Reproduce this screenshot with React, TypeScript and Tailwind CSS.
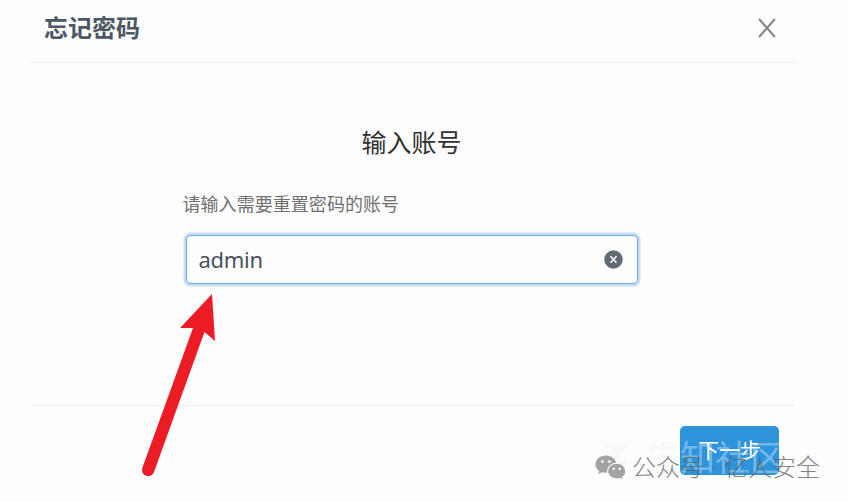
import React from "react";

const cjk = "font-['Noto_Sans','Noto_Sans_CJK_SC',sans-serif]";

function WeChatIcon() {
  return (
    <svg width="32" height="27" viewBox="0 0 32 27" className="shrink-0">
      <path
        d="M10.800.500C4.900.500.400 4.400.400 9.300c0 2.800 1.500 5.100 3.800 6.700l-1 3.300 3.800-2c1.200.3 2.500.5 3.800.5 6 0 10.500-3.800 10.500-8.500S16.800.500 10.800.500z"
        fill="#a3a3a3"
      />
      <circle cx="7.400" cy="6.600" r="1.400" fill="#fdfdfd" />
      <circle cx="14.400" cy="6.600" r="1.400" fill="#fdfdfd" />
      <path
        d="M21.700 8.300c-5.200 0-9.100 3.400-9.100 7.900s3.900 7.800 9.100 7.800c1.200 0 2.300-.2 3.300-.5l3.300 1.900-.9-3c2.100-1.500 3.400-3.700 3.400-6.200 0-4.500-3.900-7.900-9.100-7.900z"
        fill="#a3a3a3"
        stroke="#fdfdfd"
        strokeWidth="1.100"
      />
      <circle cx="18.700" cy="13.800" r="1.200" fill="#fdfdfd" />
      <circle cx="24.700" cy="13.800" r="1.200" fill="#fdfdfd" />
    </svg>
  );
}

export default function App() {
  return (
    <div className={`relative h-[502px] w-[848px] overflow-hidden bg-[#fdfdfd] pl-[31px] pr-[54px] ${cjk}`}>
      <header className="flex h-[63px] items-center justify-between border-b border-[#ececee] pr-[18px] pl-[13px] pb-[7px]">
        <h1 className="text-[24px] leading-none font-bold text-[#4c5763]">忘记密码</h1>
        <button aria-label="关闭">
          <svg width="18" height="20" viewBox="0 0 18 20" className="block">
            <path d="M1 1L17 19M17 1L1 19" stroke="#858585" strokeWidth="2" fill="none" />
          </svg>
        </button>
      </header>

      <main className="flex h-[342px] flex-col items-center pt-[65px]">
        <h2 className="-translate-x-px text-[25px] leading-[28px] text-[#303030]">输入账号</h2>
        <div className="mt-[38px] w-[456px] -translate-x-[2px]">
          <label className="block text-[18px] leading-[20px] tracking-[0.05px] text-[#707070]">请输入需要重置密码的账号</label>
          <div className="mt-[21px] ml-[3px] flex h-[49px] w-[452px] items-center justify-between rounded-[5px] border border-[#6fa5e0] bg-[#fefefe] pr-[14px] pl-[12px] shadow-[0_0_0_2.5px_#c6ddf9]">
            <span className="pb-px text-[22px] leading-none tracking-[-0.3px] text-[#48525e]">admin</span>
            <svg width="19" height="19" viewBox="0 0 19 19">
              <circle cx="9.500" cy="9.500" r="9.200" fill="#626a73" />
              <path d="M6.500 6.300l6 6.400M12.500 6.300l-6 6.400" stroke="#fff" strokeWidth="1.600" />
            </svg>
          </div>
        </div>
      </main>

      <footer className="flex justify-end border-t border-[#efeff1] pt-[20px] pr-[15px]">
        <button className="h-[49px] w-[99px] rounded-[5px] bg-[#2d94dc] text-[21px] leading-none text-white">下一步</button>
      </footer>

      <svg width="90" height="195" viewBox="0 0 90 195" className="absolute top-[287px] left-[137px]">
        <path d="M75 7L78 54L67.500 45L17 185A6 6 0 0 1 5.300 181L56 41H43Z" fill="#ec1c24" />
      </svg>

      <div className="absolute top-[440px] left-[604px] flex items-center">
        <svg width="41" height="35" viewBox="0 0 41 35">
          <path d="M1 4H23L12 20H1L9 9H1ZM14 20H24L14 32H4Z" fill="#f8f8fa" />
        </svg>
        <span className="text-[35px] leading-[35px] whitespace-nowrap text-white/35">
          <span className="text-[#f8f8fa]">先</span>知社区
        </span>
      </div>
      <div className="absolute top-[455px] left-[595px] flex items-start">
        <WeChatIcon />
        <span className="ml-[5px] text-[24px] leading-[24px] font-light whitespace-nowrap text-[#606060]/80 [word-spacing:0.8px]">公众号 · 亿人安全</span>
      </div>
    </div>
  );
}
